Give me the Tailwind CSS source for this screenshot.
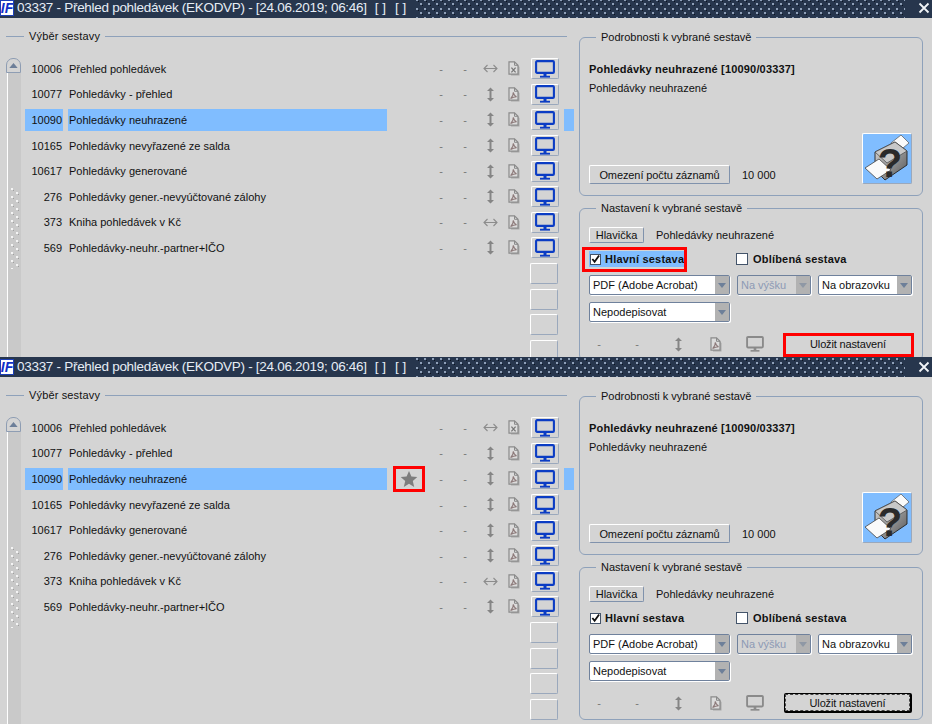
<!DOCTYPE html>
<html lang="cs">
<head>
<meta charset="utf-8">
<title>Přehled pohledávek</title>
<script src="https://cdn.jsdelivr.net/npm/@tailwindcss/browser@4"></script>
</head>
<body class="m-0 bg-[#d4d4d4]">
<svg width="0" height="0" class="absolute">
  <defs>
    <pattern id="dots" x="0" y="0" width="8" height="9" patternUnits="userSpaceOnUse">
      <rect x="1" y="1" width="2" height="2" fill="#8fa0b8"/><rect x="3" y="3" width="1" height="1" fill="#0d1522"/>
      <rect x="5" y="5" width="2" height="2" fill="#8fa0b8"/><rect x="7" y="7" width="1" height="1" fill="#0d1522"/>
    </pattern>
    <pattern id="grip" x="0" y="0" width="10" height="8" patternUnits="userSpaceOnUse">
      <rect x="1" y="1" width="2" height="2" fill="#f4f4f4"/><rect x="6" y="5" width="2" height="2" fill="#f4f4f4"/>
      <rect x="3" y="3" width="1" height="1" fill="#a0a0a0"/><rect x="8" y="7" width="1" height="1" fill="#a0a0a0"/>
    </pattern>
    <symbol id="mon" viewBox="0 0 20 18">
      <rect x="1.1" y="1.1" width="17.8" height="11.8" rx="1" fill="none" stroke="currentColor" stroke-width="2.1"/>
      <rect x="8.5" y="13" width="3" height="3" fill="currentColor"/>
      <rect x="5" y="15.8" width="10" height="1.8" fill="currentColor"/>
    </symbol>
    <symbol id="pdf" viewBox="0 0 12 15">
      <path d="M3 2.5H8L11.5 6V14.5H3Z" fill="#a8a8a8"/>
      <path d="M1 .8H6.5L10 4.3V13.2H1Z" fill="#dcdcdc" stroke="#8a8a8a" stroke-width="1.2"/>
      <path d="M6.5 .8V4.3H10" fill="none" stroke="#8a8a8a"/>
      <path d="M2.6 11.6C4.6 9.6 5.6 7.4 5.2 5.4C6 8 7 9.4 8.6 9.8C6.6 9.8 4.6 10.4 2.6 11.6Z" fill="none" stroke="#8d7a7a" stroke-width="1.1"/>
    </symbol>
    <symbol id="xls" viewBox="0 0 12 15">
      <path d="M3 2.5H8L11.5 6V14.5H3Z" fill="#a8a8a8"/>
      <path d="M1 .8H6.5L10 4.3V13.2H1Z" fill="#dcdcdc" stroke="#8a8a8a" stroke-width="1.2"/>
      <path d="M6.5 .8V4.3H10" fill="none" stroke="#8a8a8a"/>
      <path d="M3.4 6.6L7.6 11.4M7.6 6.6L3.4 11.4" stroke="#777" stroke-width="1.3"/>
    </symbol>
    <symbol id="vert" viewBox="0 0 9 15">
      <path d="M4.5 .5L8 4H5.5V11H8L4.5 14.5L1 11H3.5V4H1Z" fill="#858585"/>
    </symbol>
    <symbol id="horz" viewBox="0 0 15 9">
      <path d="M1 4.5H14M4.5 1L1 4.5L4.5 8M10.5 1L14 4.5L10.5 8" fill="none" stroke="#8c8c8c" stroke-width="1.1"/>
    </symbol>
    <symbol id="down" viewBox="0 0 10 6"><path d="M0 0H10L5 6Z" fill="#6d7f99"/></symbol>
    <linearGradient id="pb" x1="0" y1="0" x2="1" y2="1"><stop offset="0" stop-color="#dddddd"/><stop offset="1" stop-color="#555555"/></linearGradient>
    <symbol id="printer" viewBox="0 0 48 49">
      <path d="M28 9L38 1L46 9L34 19Z" fill="#fafafa" stroke="#555" stroke-width=".7"/>
      <path d="M12 18L32 8L44 17V31L22 46L12 36Z" fill="url(#pb)" stroke="#222" stroke-width=".9"/>
      <path d="M12 18L32 8L44 17L24 29Z" fill="#c8c8c8" stroke="#444" stroke-width=".7"/>
      <path d="M2 34L16 25L28 36L14 45Z" fill="#fafafa" stroke="#444" stroke-width=".8"/>
      <text x="27" y="43" text-anchor="middle" font-family="Liberation Sans" font-weight="700" font-size="40" fill="#2a2a2a">?</text>
    </symbol>
  </defs>
</svg>

<div class="h-[724px] w-[932px] overflow-hidden font-['Liberation_Sans',Arial,sans-serif] text-[11px] leading-[14px] text-[#111]">

<!-- ================= PANE 1 ================= -->
<section class="relative -mt-[2px] flex h-[359px] flex-col overflow-hidden">
  <header class="flex h-[20px] shrink-0 items-center whitespace-nowrap bg-[#27364d] text-[13.5px] text-[#e6edf5]">
    <span class="flex h-[16px] w-[14px] shrink-0 items-center justify-center overflow-hidden border border-[#1d3fb5] bg-white text-[14px] font-bold italic text-[#1030c8]">IF</span>
    <span class="ml-[3px] tracking-[-0.29px]">03337 - Přehled pohledávek (EKODVP) - [24.06.2019; 06:46]</span>
    <span class="ml-[8px]">[ ]</span><span class="ml-[9px]">[ ]</span>
    <svg class="ml-auto h-[20px] w-[490px] shrink-0"><rect width="490" height="20" fill="url(#dots)"/></svg>
    <svg class="ml-[13px] mr-[2px] h-[12px] w-[12px] shrink-0" viewBox="0 0 12 12"><path d="M1.5 1.5L10.5 10.5M10.5 1.5L1.5 10.5" stroke="#f2f5f8" stroke-width="1.8"/></svg>
  </header>
  <div class="flex min-h-0 flex-1 pl-[6px]">
    <div class="relative mt-[18px] w-[561px] border-t border-[#8ea1ba]">
      <span class="absolute -top-[8px] left-[18px] bg-[#d4d4d4] px-[5px] tracking-[0.15px]">Výběr sestavy</span>
      <div class="flex h-full">
        <div class="mt-[21px] flex w-[15px] shrink-0 flex-col">
          <div class="flex h-[15px] items-center justify-center rounded-t-[7px] border border-[#8e9db3] bg-[#d4d4d4]"><svg class="h-[5px] w-[9px] rotate-180"><use href="#down"/></svg></div>
          <div class="ml-[1px] flex-1 border-l border-white bg-[#c9c9c9] pl-[2px] pt-[114px]"><svg class="h-[82px] w-[10px]"><rect width="10" height="82" fill="url(#grip)"/></svg></div>
        </div>
        <div class="ml-[4px] mt-[19px]">
          <div class="flex h-[25.6px] items-center"><span class="w-[38px] pr-[1px] text-right">10006</span><span class="ml-[5px] w-[319px] pl-[1px]">Přehled pohledávek</span><span class="w-[42px]"></span><span class="w-[24px] text-center text-[#777]">-</span><span class="w-[24px] text-center text-[#777]">-</span><span class="flex w-[26px] justify-center"><svg class="h-[9px] w-[15px]"><use href="#horz"/></svg></span><span class="flex w-[22px] justify-center"><svg class="h-[15px] w-[12px]"><use href="#xls"/></svg></span><button class="ml-[6px] flex h-[21px] w-[28px] items-center justify-center rounded-[2px] border border-[#9aa8bc] border-l-white border-t-white text-[#0b3cc4]"><svg class="h-[18px] w-[20px]"><use href="#mon"/></svg></button></div>
          <div class="flex h-[25.6px] items-center"><span class="w-[38px] pr-[1px] text-right">10077</span><span class="ml-[5px] w-[319px] pl-[1px]">Pohledávky - přehled</span><span class="w-[42px]"></span><span class="w-[24px] text-center text-[#777]">-</span><span class="w-[24px] text-center text-[#777]">-</span><span class="flex w-[26px] justify-center"><svg class="h-[15px] w-[9px]"><use href="#vert"/></svg></span><span class="flex w-[22px] justify-center"><svg class="h-[15px] w-[12px]"><use href="#pdf"/></svg></span><button class="ml-[6px] flex h-[21px] w-[28px] items-center justify-center rounded-[2px] border border-[#9aa8bc] border-l-white border-t-white text-[#0b3cc4]"><svg class="h-[18px] w-[20px]"><use href="#mon"/></svg></button></div>
          <div class="flex h-[25.6px] items-center"><span class="flex h-[22px] w-[38px] items-center justify-end bg-[#80bdff] pr-[1px]">10090</span><span class="ml-[5px] flex h-[22px] w-[319px] items-center bg-[#80bdff] pl-[1px]">Pohledávky neuhrazené</span><span class="w-[42px]"></span><span class="w-[24px] text-center text-[#777]">-</span><span class="w-[24px] text-center text-[#777]">-</span><span class="flex w-[26px] justify-center"><svg class="h-[15px] w-[9px]"><use href="#vert"/></svg></span><span class="flex w-[22px] justify-center"><svg class="h-[15px] w-[12px]"><use href="#pdf"/></svg></span><button class="ml-[6px] flex h-[21px] w-[28px] items-center justify-center rounded-[2px] border border-[#9aa8bc] border-l-white border-t-white text-[#0b3cc4]"><svg class="h-[18px] w-[20px]"><use href="#mon"/></svg></button><span class="ml-[5px] h-[22px] w-[10px] bg-[#80bdff]"></span></div>
          <div class="flex h-[25.6px] items-center"><span class="w-[38px] pr-[1px] text-right">10165</span><span class="ml-[5px] w-[319px] pl-[1px]">Pohledávky nevyřazené ze salda</span><span class="w-[42px]"></span><span class="w-[24px] text-center text-[#777]">-</span><span class="w-[24px] text-center text-[#777]">-</span><span class="flex w-[26px] justify-center"><svg class="h-[15px] w-[9px]"><use href="#vert"/></svg></span><span class="flex w-[22px] justify-center"><svg class="h-[15px] w-[12px]"><use href="#pdf"/></svg></span><button class="ml-[6px] flex h-[21px] w-[28px] items-center justify-center rounded-[2px] border border-[#9aa8bc] border-l-white border-t-white text-[#0b3cc4]"><svg class="h-[18px] w-[20px]"><use href="#mon"/></svg></button></div>
          <div class="flex h-[25.6px] items-center"><span class="w-[38px] pr-[1px] text-right">10617</span><span class="ml-[5px] w-[319px] pl-[1px]">Pohledávky generované</span><span class="w-[42px]"></span><span class="w-[24px] text-center text-[#777]">-</span><span class="w-[24px] text-center text-[#777]">-</span><span class="flex w-[26px] justify-center"><svg class="h-[15px] w-[9px]"><use href="#vert"/></svg></span><span class="flex w-[22px] justify-center"><svg class="h-[15px] w-[12px]"><use href="#pdf"/></svg></span><button class="ml-[6px] flex h-[21px] w-[28px] items-center justify-center rounded-[2px] border border-[#9aa8bc] border-l-white border-t-white text-[#0b3cc4]"><svg class="h-[18px] w-[20px]"><use href="#mon"/></svg></button></div>
          <div class="flex h-[25.6px] items-center"><span class="w-[38px] pr-[1px] text-right">276</span><span class="ml-[5px] w-[319px] pl-[1px]">Pohledávky gener.-nevyúčtované zálohy</span><span class="w-[42px]"></span><span class="w-[24px] text-center text-[#777]">-</span><span class="w-[24px] text-center text-[#777]">-</span><span class="flex w-[26px] justify-center"><svg class="h-[15px] w-[9px]"><use href="#vert"/></svg></span><span class="flex w-[22px] justify-center"><svg class="h-[15px] w-[12px]"><use href="#pdf"/></svg></span><button class="ml-[6px] flex h-[21px] w-[28px] items-center justify-center rounded-[2px] border border-[#9aa8bc] border-l-white border-t-white text-[#0b3cc4]"><svg class="h-[18px] w-[20px]"><use href="#mon"/></svg></button></div>
          <div class="flex h-[25.6px] items-center"><span class="w-[38px] pr-[1px] text-right">373</span><span class="ml-[5px] w-[319px] pl-[1px]">Kniha pohledávek v Kč</span><span class="w-[42px]"></span><span class="w-[24px] text-center text-[#777]">-</span><span class="w-[24px] text-center text-[#777]">-</span><span class="flex w-[26px] justify-center"><svg class="h-[9px] w-[15px]"><use href="#horz"/></svg></span><span class="flex w-[22px] justify-center"><svg class="h-[15px] w-[12px]"><use href="#pdf"/></svg></span><button class="ml-[6px] flex h-[21px] w-[28px] items-center justify-center rounded-[2px] border border-[#9aa8bc] border-l-white border-t-white text-[#0b3cc4]"><svg class="h-[18px] w-[20px]"><use href="#mon"/></svg></button></div>
          <div class="flex h-[25.6px] items-center"><span class="w-[38px] pr-[1px] text-right">569</span><span class="ml-[5px] w-[319px] pl-[1px]">Pohledávky-neuhr.-partner+IČO</span><span class="w-[42px]"></span><span class="w-[24px] text-center text-[#777]">-</span><span class="w-[24px] text-center text-[#777]">-</span><span class="flex w-[26px] justify-center"><svg class="h-[15px] w-[9px]"><use href="#vert"/></svg></span><span class="flex w-[22px] justify-center"><svg class="h-[15px] w-[12px]"><use href="#pdf"/></svg></span><button class="ml-[6px] flex h-[21px] w-[28px] items-center justify-center rounded-[2px] border border-[#9aa8bc] border-l-white border-t-white text-[#0b3cc4]"><svg class="h-[18px] w-[20px]"><use href="#mon"/></svg></button></div>
          <div class="flex h-[25.6px] items-center pl-[505px]"><span class="h-[21px] w-[28px] rounded-[2px] border border-[#9aa8bc] border-l-white border-t-white"></span></div>
          <div class="flex h-[25.6px] items-center pl-[505px]"><span class="h-[21px] w-[28px] rounded-[2px] border border-[#9aa8bc] border-l-white border-t-white"></span></div>
          <div class="flex h-[25.6px] items-center pl-[505px]"><span class="h-[21px] w-[28px] rounded-[2px] border border-[#9aa8bc] border-l-white border-t-white"></span></div>
          <div class="flex h-[25.6px] items-center pl-[505px]"><span class="h-[21px] w-[28px] rounded-[2px] border border-[#9aa8bc] border-l-white border-t-white"></span></div>
        </div>
      </div>
    </div>
    <div class="ml-[12px] flex w-[344px] shrink-0 flex-col">
      <div class="relative mt-[19px] flex h-[159px] shrink-0 flex-col rounded-[6px] border border-[#8ea1ba] pl-[9px] pr-[10px] pt-[24px] pb-[11px]">
        <span class="absolute -top-[8px] left-[16px] bg-[#d4d4d4] px-[5px]">Podrobnosti k vybrané sestavě</span>
        <div class="h-[16px] font-bold tracking-[0.17px]">Pohledávky neuhrazené [10090/03337]</div>
        <div class="mt-[3px] h-[16px]">Pohledávky neuhrazené</div>
        <div class="mt-auto flex items-end justify-between">
          <div class="flex items-center"><button class="h-[19px] w-[141px] rounded-[2px] border border-[#8092ac] border-l-white border-t-white tracking-[-0.1px]">Omezení počtu záznamů</button><span class="ml-[12px]">10 000</span></div>
          <button class="flex h-[51px] w-[50px] items-center justify-center rounded-[2px] border border-[#9aa8bc] border-l-white border-t-white bg-[#80bdff]"><svg class="h-[49px] w-[48px]"><use href="#printer"/></svg></button>
        </div>
      </div>
      <div class="relative mt-[12px] h-[153px] shrink-0 rounded-[6px] border border-[#8ea1ba] pl-[9px] pt-[18px]">
        <span class="absolute -top-[8px] left-[16px] bg-[#d4d4d4] px-[5px]">Nastavení k vybrané sestavě</span>
        <div class="flex h-[16px] items-center"><button class="h-[16px] w-[55px] rounded-[2px] border border-[#8092ac] border-l-white border-t-white">Hlavička</button><span class="ml-[12px]">Pohledávky neuhrazené</span></div>
        <div class="mt-[8px] flex h-[16px] items-center whitespace-nowrap font-bold tracking-[0.2px]">
          <span class="flex h-[16px] w-[95px] shrink-0 items-center bg-[#80bdff]"><span class="ml-[1px] flex h-[11px] w-[11px] shrink-0 items-center justify-center border border-[#44546a] bg-white"><svg class="h-[10px] w-[10px]" viewBox="0 0 10 10"><path d="M1.5 5L4 8L9 1" fill="none" stroke="#111" stroke-width="2"/></svg></span><span class="ml-[4px]">Hlavní sestava</span></span>
          <span class="ml-[52px] h-[12px] w-[12px] shrink-0 border border-[#44546a] bg-white"></span><span class="ml-[5px]">Oblíbená sestava</span>
        </div>
        <div class="mt-[8px] flex h-[20px]">
          <div class="flex w-[141px] rounded-[2px] border border-[#6f819c] bg-white shadow-[1px_1px_0_#fff]"><span class="flex-1 self-center pl-[3px]">PDF (Adobe Acrobat)</span><span class="flex w-[14px] items-center justify-center bg-[#b2b2b2]"><svg class="h-[5px] w-[8px]"><use href="#down"/></svg></span></div>
          <div class="ml-[7px] flex w-[74px] rounded-[2px] border border-[#6f819c] shadow-[1px_1px_0_#fff]"><span class="flex-1 self-center pl-[3px] text-[#8d9ab4]">Na výšku</span><span class="flex w-[14px] items-center justify-center bg-[#b2b2b2]"><svg class="h-[5px] w-[8px] opacity-50"><use href="#down"/></svg></span></div>
          <div class="ml-[7px] flex w-[94px] rounded-[2px] border border-[#6f819c] bg-white shadow-[1px_1px_0_#fff]"><span class="flex-1 self-center pl-[3px]">Na obrazovku</span><span class="flex w-[14px] items-center justify-center bg-[#b2b2b2]"><svg class="h-[5px] w-[8px]"><use href="#down"/></svg></span></div>
        </div>
        <div class="mt-[7px] flex h-[20px]">
          <div class="flex w-[141px] rounded-[2px] border border-[#6f819c] bg-white shadow-[1px_1px_0_#fff]"><span class="flex-1 self-center pl-[3px]">Nepodepisovat</span><span class="flex w-[14px] items-center justify-center bg-[#b2b2b2]"><svg class="h-[5px] w-[8px]"><use href="#down"/></svg></span></div>
        </div>
        <div class="mt-[12px] flex h-[20px] items-center">
          <span class="w-[20px] text-center text-[#777]">-</span><span class="w-[56px] text-center text-[#777]">-</span><span class="flex w-[26px] justify-center"><svg class="h-[15px] w-[9px]"><use href="#vert"/></svg></span><span class="flex w-[50px] justify-center"><svg class="h-[15px] w-[12px]"><use href="#pdf"/></svg></span><span class="flex w-[28px] justify-center text-[#8a8a8a]"><svg class="h-[16px] w-[18px]"><use href="#mon"/></svg></span>
          <button class="ml-[15px] h-[20px] w-[128px] tracking-[-0.15px]">Uložit nastavení</button>
        </div>
      </div>
    </div>
  </div>
  <div class="absolute left-[582px] top-[249px] h-[25px] w-[105px] border-[3px] border-[#f00]"></div>
  <div class="absolute left-[783px] top-[335px] h-[24px] w-[131px] border-[3px] border-[#f00]"></div>
</section>

<!-- ================= PANE 2 ================= -->
<section class="relative flex h-[367px] flex-col overflow-hidden">
  <header class="flex h-[20px] shrink-0 items-center whitespace-nowrap bg-[#27364d] text-[13.5px] text-[#e6edf5]">
    <span class="flex h-[16px] w-[14px] shrink-0 items-center justify-center overflow-hidden border border-[#1d3fb5] bg-white text-[14px] font-bold italic text-[#1030c8]">IF</span>
    <span class="ml-[3px] tracking-[-0.29px]">03337 - Přehled pohledávek (EKODVP) - [24.06.2019; 06:46]</span>
    <span class="ml-[8px]">[ ]</span><span class="ml-[9px]">[ ]</span>
    <svg class="ml-auto h-[20px] w-[490px] shrink-0"><rect width="490" height="20" fill="url(#dots)"/></svg>
    <svg class="ml-[13px] mr-[2px] h-[12px] w-[12px] shrink-0" viewBox="0 0 12 12"><path d="M1.5 1.5L10.5 10.5M10.5 1.5L1.5 10.5" stroke="#f2f5f8" stroke-width="1.8"/></svg>
  </header>
  <div class="flex min-h-0 flex-1 pl-[6px]">
    <div class="relative mt-[18px] w-[561px] border-t border-[#8ea1ba]">
      <span class="absolute -top-[8px] left-[18px] bg-[#d4d4d4] px-[5px] tracking-[0.15px]">Výběr sestavy</span>
      <div class="flex h-full">
        <div class="mt-[21px] flex w-[15px] shrink-0 flex-col">
          <div class="flex h-[15px] items-center justify-center rounded-t-[7px] border border-[#8e9db3] bg-[#d4d4d4]"><svg class="h-[5px] w-[9px] rotate-180"><use href="#down"/></svg></div>
          <div class="ml-[1px] flex-1 border-l border-white bg-[#c9c9c9] pl-[2px] pt-[114px]"><svg class="h-[82px] w-[10px]"><rect width="10" height="82" fill="url(#grip)"/></svg></div>
        </div>
        <div class="ml-[4px] mt-[19px]">
          <div class="flex h-[25.6px] items-center"><span class="w-[38px] pr-[1px] text-right">10006</span><span class="ml-[5px] w-[319px] pl-[1px]">Přehled pohledávek</span><span class="w-[42px]"></span><span class="w-[24px] text-center text-[#777]">-</span><span class="w-[24px] text-center text-[#777]">-</span><span class="flex w-[26px] justify-center"><svg class="h-[9px] w-[15px]"><use href="#horz"/></svg></span><span class="flex w-[22px] justify-center"><svg class="h-[15px] w-[12px]"><use href="#xls"/></svg></span><button class="ml-[6px] flex h-[21px] w-[28px] items-center justify-center rounded-[2px] border border-[#9aa8bc] border-l-white border-t-white text-[#0b3cc4]"><svg class="h-[18px] w-[20px]"><use href="#mon"/></svg></button></div>
          <div class="flex h-[25.6px] items-center"><span class="w-[38px] pr-[1px] text-right">10077</span><span class="ml-[5px] w-[319px] pl-[1px]">Pohledávky - přehled</span><span class="w-[42px]"></span><span class="w-[24px] text-center text-[#777]">-</span><span class="w-[24px] text-center text-[#777]">-</span><span class="flex w-[26px] justify-center"><svg class="h-[15px] w-[9px]"><use href="#vert"/></svg></span><span class="flex w-[22px] justify-center"><svg class="h-[15px] w-[12px]"><use href="#pdf"/></svg></span><button class="ml-[6px] flex h-[21px] w-[28px] items-center justify-center rounded-[2px] border border-[#9aa8bc] border-l-white border-t-white text-[#0b3cc4]"><svg class="h-[18px] w-[20px]"><use href="#mon"/></svg></button></div>
          <div class="flex h-[25.6px] items-center"><span class="flex h-[22px] w-[38px] items-center justify-end bg-[#80bdff] pr-[1px]">10090</span><span class="ml-[5px] flex h-[22px] w-[319px] items-center bg-[#80bdff] pl-[1px]">Pohledávky neuhrazené</span><span class="flex w-[42px] pl-[6px]"><span class="flex h-[26px] w-[32px] items-center justify-center border-[3px] border-[#f00]"><svg class="h-[18px] w-[18px]" viewBox="0 0 18 18"><path d="M9 1L11.4 6.5L17.3 7L12.8 11L14.2 16.9L9 13.8L3.8 16.9L5.2 11L.7 7L6.6 6.5Z" fill="#7d7d7d"/></svg></span></span><span class="w-[24px] text-center text-[#777]">-</span><span class="w-[24px] text-center text-[#777]">-</span><span class="flex w-[26px] justify-center"><svg class="h-[15px] w-[9px]"><use href="#vert"/></svg></span><span class="flex w-[22px] justify-center"><svg class="h-[15px] w-[12px]"><use href="#pdf"/></svg></span><button class="ml-[6px] flex h-[21px] w-[28px] items-center justify-center rounded-[2px] border border-[#9aa8bc] border-l-white border-t-white text-[#0b3cc4]"><svg class="h-[18px] w-[20px]"><use href="#mon"/></svg></button><span class="ml-[5px] h-[22px] w-[10px] bg-[#80bdff]"></span></div>
          <div class="flex h-[25.6px] items-center"><span class="w-[38px] pr-[1px] text-right">10165</span><span class="ml-[5px] w-[319px] pl-[1px]">Pohledávky nevyřazené ze salda</span><span class="w-[42px]"></span><span class="w-[24px] text-center text-[#777]">-</span><span class="w-[24px] text-center text-[#777]">-</span><span class="flex w-[26px] justify-center"><svg class="h-[15px] w-[9px]"><use href="#vert"/></svg></span><span class="flex w-[22px] justify-center"><svg class="h-[15px] w-[12px]"><use href="#pdf"/></svg></span><button class="ml-[6px] flex h-[21px] w-[28px] items-center justify-center rounded-[2px] border border-[#9aa8bc] border-l-white border-t-white text-[#0b3cc4]"><svg class="h-[18px] w-[20px]"><use href="#mon"/></svg></button></div>
          <div class="flex h-[25.6px] items-center"><span class="w-[38px] pr-[1px] text-right">10617</span><span class="ml-[5px] w-[319px] pl-[1px]">Pohledávky generované</span><span class="w-[42px]"></span><span class="w-[24px] text-center text-[#777]">-</span><span class="w-[24px] text-center text-[#777]">-</span><span class="flex w-[26px] justify-center"><svg class="h-[15px] w-[9px]"><use href="#vert"/></svg></span><span class="flex w-[22px] justify-center"><svg class="h-[15px] w-[12px]"><use href="#pdf"/></svg></span><button class="ml-[6px] flex h-[21px] w-[28px] items-center justify-center rounded-[2px] border border-[#9aa8bc] border-l-white border-t-white text-[#0b3cc4]"><svg class="h-[18px] w-[20px]"><use href="#mon"/></svg></button></div>
          <div class="flex h-[25.6px] items-center"><span class="w-[38px] pr-[1px] text-right">276</span><span class="ml-[5px] w-[319px] pl-[1px]">Pohledávky gener.-nevyúčtované zálohy</span><span class="w-[42px]"></span><span class="w-[24px] text-center text-[#777]">-</span><span class="w-[24px] text-center text-[#777]">-</span><span class="flex w-[26px] justify-center"><svg class="h-[15px] w-[9px]"><use href="#vert"/></svg></span><span class="flex w-[22px] justify-center"><svg class="h-[15px] w-[12px]"><use href="#pdf"/></svg></span><button class="ml-[6px] flex h-[21px] w-[28px] items-center justify-center rounded-[2px] border border-[#9aa8bc] border-l-white border-t-white text-[#0b3cc4]"><svg class="h-[18px] w-[20px]"><use href="#mon"/></svg></button></div>
          <div class="flex h-[25.6px] items-center"><span class="w-[38px] pr-[1px] text-right">373</span><span class="ml-[5px] w-[319px] pl-[1px]">Kniha pohledávek v Kč</span><span class="w-[42px]"></span><span class="w-[24px] text-center text-[#777]">-</span><span class="w-[24px] text-center text-[#777]">-</span><span class="flex w-[26px] justify-center"><svg class="h-[9px] w-[15px]"><use href="#horz"/></svg></span><span class="flex w-[22px] justify-center"><svg class="h-[15px] w-[12px]"><use href="#pdf"/></svg></span><button class="ml-[6px] flex h-[21px] w-[28px] items-center justify-center rounded-[2px] border border-[#9aa8bc] border-l-white border-t-white text-[#0b3cc4]"><svg class="h-[18px] w-[20px]"><use href="#mon"/></svg></button></div>
          <div class="flex h-[25.6px] items-center"><span class="w-[38px] pr-[1px] text-right">569</span><span class="ml-[5px] w-[319px] pl-[1px]">Pohledávky-neuhr.-partner+IČO</span><span class="w-[42px]"></span><span class="w-[24px] text-center text-[#777]">-</span><span class="w-[24px] text-center text-[#777]">-</span><span class="flex w-[26px] justify-center"><svg class="h-[15px] w-[9px]"><use href="#vert"/></svg></span><span class="flex w-[22px] justify-center"><svg class="h-[15px] w-[12px]"><use href="#pdf"/></svg></span><button class="ml-[6px] flex h-[21px] w-[28px] items-center justify-center rounded-[2px] border border-[#9aa8bc] border-l-white border-t-white text-[#0b3cc4]"><svg class="h-[18px] w-[20px]"><use href="#mon"/></svg></button></div>
          <div class="flex h-[25.6px] items-center pl-[505px]"><span class="h-[21px] w-[28px] rounded-[2px] border border-[#9aa8bc] border-l-white border-t-white"></span></div>
          <div class="flex h-[25.6px] items-center pl-[505px]"><span class="h-[21px] w-[28px] rounded-[2px] border border-[#9aa8bc] border-l-white border-t-white"></span></div>
          <div class="flex h-[25.6px] items-center pl-[505px]"><span class="h-[21px] w-[28px] rounded-[2px] border border-[#9aa8bc] border-l-white border-t-white"></span></div>
          <div class="flex h-[25.6px] items-center pl-[505px]"><span class="h-[21px] w-[28px] rounded-[2px] border border-[#9aa8bc] border-l-white border-t-white"></span></div>
        </div>
      </div>
    </div>
    <div class="ml-[12px] flex w-[344px] shrink-0 flex-col">
      <div class="relative mt-[19px] flex h-[159px] shrink-0 flex-col rounded-[6px] border border-[#8ea1ba] pl-[9px] pr-[10px] pt-[24px] pb-[11px]">
        <span class="absolute -top-[8px] left-[16px] bg-[#d4d4d4] px-[5px]">Podrobnosti k vybrané sestavě</span>
        <div class="h-[16px] font-bold tracking-[0.17px]">Pohledávky neuhrazené [10090/03337]</div>
        <div class="mt-[3px] h-[16px]">Pohledávky neuhrazené</div>
        <div class="mt-auto flex items-end justify-between">
          <div class="flex items-center"><button class="h-[19px] w-[141px] rounded-[2px] border border-[#8092ac] border-l-white border-t-white tracking-[-0.1px]">Omezení počtu záznamů</button><span class="ml-[12px]">10 000</span></div>
          <button class="flex h-[51px] w-[50px] items-center justify-center rounded-[2px] border border-[#9aa8bc] border-l-white border-t-white bg-[#80bdff]"><svg class="h-[49px] w-[48px]"><use href="#printer"/></svg></button>
        </div>
      </div>
      <div class="relative mt-[12px] h-[153px] shrink-0 rounded-[6px] border border-[#8ea1ba] pl-[9px] pt-[18px]">
        <span class="absolute -top-[8px] left-[16px] bg-[#d4d4d4] px-[5px]">Nastavení k vybrané sestavě</span>
        <div class="flex h-[16px] items-center"><button class="h-[16px] w-[55px] rounded-[2px] border border-[#8092ac] border-l-white border-t-white">Hlavička</button><span class="ml-[12px]">Pohledávky neuhrazené</span></div>
        <div class="mt-[8px] flex h-[16px] items-center whitespace-nowrap font-bold tracking-[0.2px]">
          <span class="flex h-[16px] w-[95px] shrink-0 items-center"><span class="ml-[1px] flex h-[11px] w-[11px] shrink-0 items-center justify-center border border-[#44546a] bg-white"><svg class="h-[10px] w-[10px]" viewBox="0 0 10 10"><path d="M1.5 5L4 8L9 1" fill="none" stroke="#111" stroke-width="2"/></svg></span><span class="ml-[4px]">Hlavní sestava</span></span>
          <span class="ml-[52px] h-[12px] w-[12px] shrink-0 border border-[#44546a] bg-white"></span><span class="ml-[5px]">Oblíbená sestava</span>
        </div>
        <div class="mt-[8px] flex h-[20px]">
          <div class="flex w-[141px] rounded-[2px] border border-[#6f819c] bg-white shadow-[1px_1px_0_#fff]"><span class="flex-1 self-center pl-[3px]">PDF (Adobe Acrobat)</span><span class="flex w-[14px] items-center justify-center bg-[#b2b2b2]"><svg class="h-[5px] w-[8px]"><use href="#down"/></svg></span></div>
          <div class="ml-[7px] flex w-[74px] rounded-[2px] border border-[#6f819c] shadow-[1px_1px_0_#fff]"><span class="flex-1 self-center pl-[3px] text-[#8d9ab4]">Na výšku</span><span class="flex w-[14px] items-center justify-center bg-[#b2b2b2]"><svg class="h-[5px] w-[8px] opacity-50"><use href="#down"/></svg></span></div>
          <div class="ml-[7px] flex w-[94px] rounded-[2px] border border-[#6f819c] bg-white shadow-[1px_1px_0_#fff]"><span class="flex-1 self-center pl-[3px]">Na obrazovku</span><span class="flex w-[14px] items-center justify-center bg-[#b2b2b2]"><svg class="h-[5px] w-[8px]"><use href="#down"/></svg></span></div>
        </div>
        <div class="mt-[7px] flex h-[20px]">
          <div class="flex w-[141px] rounded-[2px] border border-[#6f819c] bg-white shadow-[1px_1px_0_#fff]"><span class="flex-1 self-center pl-[3px]">Nepodepisovat</span><span class="flex w-[14px] items-center justify-center bg-[#b2b2b2]"><svg class="h-[5px] w-[8px]"><use href="#down"/></svg></span></div>
        </div>
        <div class="mt-[12px] flex h-[20px] items-center">
          <span class="w-[20px] text-center text-[#777]">-</span><span class="w-[56px] text-center text-[#777]">-</span><span class="flex w-[26px] justify-center"><svg class="h-[15px] w-[9px]"><use href="#vert"/></svg></span><span class="flex w-[50px] justify-center"><svg class="h-[15px] w-[12px]"><use href="#pdf"/></svg></span><span class="flex w-[28px] justify-center text-[#8a8a8a]"><svg class="h-[16px] w-[18px]"><use href="#mon"/></svg></span>
          <button class="ml-[15px] h-[20px] w-[128px] rounded-[2px] border border-b-2 border-r-2 border-black p-0 tracking-[-0.15px]"><span class="flex h-full w-full items-center justify-center border border-dashed border-[#444]">Uložit nastavení</span></button>
        </div>
      </div>
    </div>
  </div>
</section>
</div>
</body>
</html>
